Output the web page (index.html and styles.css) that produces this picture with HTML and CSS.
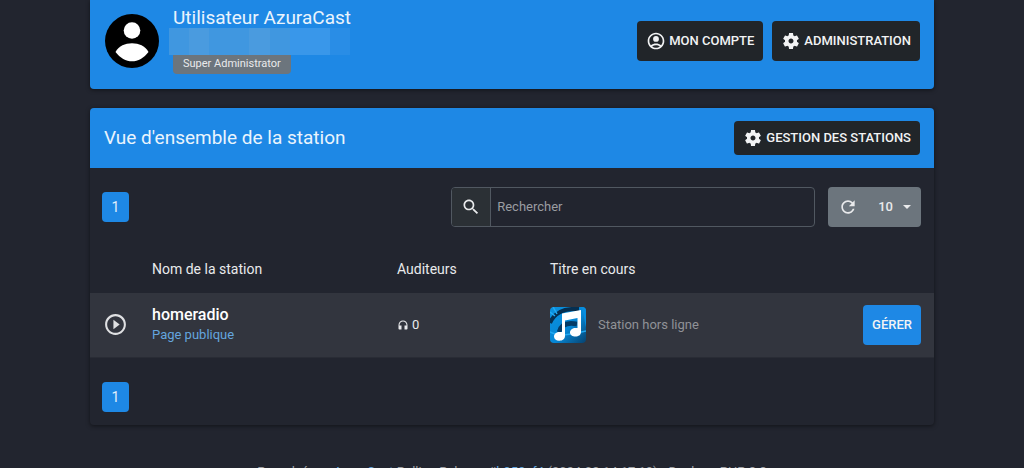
FILE: index.html
```html
<!DOCTYPE html>
<html lang="fr">
<head>
<meta charset="utf-8">
<title>AzuraCast</title>
<link rel="stylesheet" href="styles.css">
</head>
<body>
<svg class="sprite" aria-hidden="true">
  <symbol id="gear" viewBox="0 0 24 24"><path d="M19.14 12.94c.04-.3.06-.61.06-.94 0-.32-.02-.64-.07-.94l2.03-1.58c.18-.14.23-.41.12-.61l-1.92-3.32c-.12-.22-.37-.29-.59-.22l-2.39.96c-.5-.38-1.03-.7-1.62-.94l-.36-2.54c-.04-.24-.24-.41-.48-.41h-3.84c-.24 0-.43.17-.47.41l-.36 2.54c-.59.24-1.13.57-1.62.94l-2.39-.96c-.22-.08-.47 0-.59.22L2.740 8.870c-.12.21-.08.47.12.61l2.03 1.58c-.05.3-.09.63-.09.94s.02.64.07.94l-2.03 1.58c-.18.14-.23.41-.12.61l1.92 3.32c.12.22.37.29.59.22l2.39-.96c.5.38 1.03.7 1.62.94l.36 2.54c.05.24.24.41.48.41h3.84c.24 0 .44-.17.47-.41l.36-2.54c.59-.24 1.13-.56 1.62-.94l2.39.96c.22.08.47 0 .59-.22l1.92-3.32c.12-.22.07-.47-.12-.61l-2.01-1.58zM12 15c-1.65 0-3-1.35-3-3s1.35-3 3-3 3 1.35 3 3-1.35 3-3 3z"/></symbol>
</svg>
<main class="container">
  <section class="card profile">
    <svg class="avatar" viewBox="0 0 54 54" aria-hidden="true"><circle cx="27" cy="27" r="27"/><circle cx="27" cy="16.500" r="8.3" fill="#fff"/><path fill="#fff" d="M10.500 38C14 32 20 29.300 27 29.300s13 2.700 16.500 8.700C39 44 33 47.300 27 47.300S15 44 10.500 38z"/></svg>
    <div class="identity">
      <h1 class="title">Utilisateur AzuraCast</h1>
      <div class="redacted"><i></i><i></i><i></i><i></i><i></i><i></i><i></i><i></i><i></i></div>
      <span class="badge">Super Administrator</span>
    </div>
    <div class="actions">
      <button class="btn btn-dark btn-tall" type="button"><svg class="icon" viewBox="0 0 24 24" aria-hidden="true"><path d="M12 2C6.480 2 2 6.480 2 12s4.480 10 10 10 10-4.480 10-10S17.520 2 12 2zM7.350 18.500C8.660 17.560 10.260 17 12 17s3.340.56 4.650 1.500C15.340 19.440 13.740 20 12 20s-3.340-.56-4.650-1.500zm10.790-1.380C16.450 15.800 14.320 15 12 15s-4.450.8-6.140 2.120C4.700 15.730 4 13.950 4 12c0-4.420 3.580-8 8-8s8 3.580 8 8c0 1.950-.7 3.730-1.860 5.120z"/><circle cx="12" cy="9.500" r="3.500"/></svg>MON COMPTE</button>
      <button class="btn btn-dark btn-tall" type="button"><svg class="icon" aria-hidden="true"><use href="#gear"/></svg>ADMINISTRATION</button>
    </div>
  </section>

  <section class="card stations">
    <header class="card-header">
      <h2 class="title">Vue d'ensemble de la station</h2>
      <button class="btn btn-dark" type="button"><svg class="icon" aria-hidden="true"><use href="#gear"/></svg>GESTION DES STATIONS</button>
    </header>
    <div class="toolbar">
      <a class="page" href="#">1</a>
      <div class="search">
        <label class="search-icon" for="search" aria-label="Rechercher"><svg class="icon" viewBox="0 0 24 24" aria-hidden="true"><path d="M15.500 14h-.79l-.28-.27C15.410 12.590 16 11.110 16 9.500 16 5.910 13.090 3 9.500 3S3 5.910 3 9.500 5.910 16 9.500 16c1.610 0 3.090-.59 4.230-1.570l.27.28v.79l5 4.990L20.490 19l-4.990-5zm-6 0C7.010 14 5 11.990 5 9.500S7.010 5 9.500 5 14 7.010 14 9.500 11.990 14 9.500 14z"/></svg></label>
        <input class="search-input" id="search" type="text" placeholder="Rechercher">
      </div>
      <div class="group">
        <button class="group-btn" type="button" aria-label="Actualiser"><svg class="icon" viewBox="0 0 24 24" aria-hidden="true"><path d="M17.650 6.350C16.200 4.900 14.210 4 12 4c-4.420 0-7.990 3.580-7.990 8s3.570 8 7.990 8c3.730 0 6.840-2.550 7.730-6h-2.080c-.82 2.330-3.040 4-5.650 4-3.310 0-6-2.690-6-6s2.690-6 6-6c1.660 0 3.140.69 4.220 1.780L13 11h7V4l-2.350 2.350z"/></svg></button>
        <button class="group-btn" type="button">10<span class="caret"></span></button>
      </div>
    </div>
    <table class="table">
      <colgroup><col class="col-play"><col class="col-name"><col class="col-listeners"><col><col class="col-action"></colgroup>
      <thead>
        <tr><th></th><th>Nom de la station</th><th>Auditeurs</th><th>Titre en cours</th><th></th></tr>
      </thead>
      <tbody>
        <tr>
          <td class="cell-play"><button class="play" type="button" aria-label="Lecture"><svg viewBox="0 0 24 24" aria-hidden="true"><path d="M10 16.500l6-4.500-6-4.500v9zM12 2C6.480 2 2 6.480 2 12s4.480 10 10 10 10-4.480 10-10S17.520 2 12 2zm0 18c-4.410 0-8-3.590-8-8s3.590-8 8-8 8 3.590 8 8-3.590 8-8 8z"/></svg></button></td>
          <td><div class="station-name">homeradio</div><a class="link" href="#">Page publique</a></td>
          <td><div class="listeners"><svg class="headphones" viewBox="0 0 24 24" aria-hidden="true"><path d="M12 3c-4.970 0-9 4.030-9 9v7c0 1.100.9 2 2 2h4v-8H5v-1c0-3.870 3.130-7 7-7s7 3.130 7 7v1h-4v8h4c1.100 0 2-.9 2-2v-7c0-4.970-4.030-9-9-9z"/></svg>0</div></td>
          <td><div class="now-playing">
            <svg class="art" viewBox="0 0 36 36" aria-hidden="true">
              <defs><linearGradient id="sky" x1="0" y1="0" x2="1" y2="1"><stop offset="0" stop-color="#0b91df"/><stop offset=".55" stop-color="#0687d5"/><stop offset="1" stop-color="#07426f"/></linearGradient></defs>
              <rect width="36" height="36" fill="url(#sky)"/>
              <path d="M0 16C4 6 13 1 29 2" fill="none" stroke="#062f50" stroke-width="4"/>
              <path d="M9 25c2-7 8-10 18-8" fill="none" stroke="#053b65" stroke-width="4.500"/>
              <path d="M0 25c10 5 24 2 36-1M3 0l4 7M0 5l5 4" fill="none" stroke="#23aaf2" stroke-width="1.500"/>
              <path d="M31 0h5v20c-2-8-2-14-5-20z" fill="#078ee0"/>
              <path fill="#fff" d="M12 6.500L31 3v22c0 3-2.500 4.500-5.500 4.500S20 28 20 25.500s2.500-4.500 5.500-4.500h2V11L15 13.500V29c0 3-2.500 4.700-5.700 4.700S4 32 4 29.500 6.500 25 9.500 25H12z"/>
            </svg>
            <span class="offline">Station hors ligne</span>
          </div></td>
          <td class="cell-action"><button class="btn btn-primary btn-tall" type="button">GÉRER</button></td>
        </tr>
      </tbody>
    </table>
    <div class="pager"><a class="page" href="#">1</a></div>
  </section>
</main>
<footer class="footer">Propulsé par <a class="link" href="#">AzuraCast</a> Rolling Release #<a class="link" href="#">b959ef4</a> (2024-02-14 17:19) • Docker • PHP 8.3</footer>
</body>
</html>
```
FILE: styles.css
```css
* { box-sizing: border-box; }
html { background: #22252f; }
body {
  margin: 0;
  overflow: hidden;
  color: #e9eaec;
  font: 13px/20px Roboto, sans-serif;
}
button, input { font: inherit; color: inherit; }
.sprite { display: none; }
.container { max-width: 844px; margin: 0 auto; }
.card {
  border-radius: 4px;
  box-shadow: 0 1px 4px rgba(0, 0, 0, .5);
  overflow: hidden;
}
.title { margin: 0; font-size: 19px; line-height: 24px; font-weight: 400; color: #eaf4fd; }
.icon { width: 20px; height: 20px; fill: currentColor; flex: none; }

.profile {
  display: flex;
  align-items: flex-start;
  gap: 14px;
  padding: 6px 14px 15px 15px;
  border-radius: 0 0 4px 4px;
  background: #1e88e5;
}
.avatar { width: 54px; height: 54px; margin-top: 8px; }
.identity { flex: 1; }
.redacted { display: flex; width: 181px; height: 27px; margin: -2px 0 0 -4px; }
.redacted i { flex: 1; background: #4097e0; }
.redacted i:nth-child(2), .redacted i:nth-child(5) { background: #4a9bdf; }
.redacted i:nth-child(7), .redacted i:nth-child(8) { background: #3997ea; }
.redacted i:nth-child(9) { background: #298de6; }
.badge {
  display: block;
  width: max-content;
  padding: 0 10px 1px;
  border-radius: 0 0 4px 4px;
  background: #6c757d;
  font-size: 11px;
  line-height: 18px;
}
.actions { display: flex; gap: 9px; margin-top: 15px; }

.btn {
  display: inline-flex;
  align-items: center;
  gap: 3px;
  height: 34px;
  padding: 0 9px;
  border: 0;
  border-radius: 4px;
  color: #f2f3f4;
  font-weight: 500;
  white-space: nowrap;
}
.btn-dark { background: #212529; }
.btn-primary { background: #1e88e5; }
.btn-tall { height: 40px; }

.stations { margin-top: 19px; }
.card-header {
  display: flex;
  align-items: center;
  justify-content: space-between;
  padding: 13px 14px;
  background: #1e88e5;
}
.toolbar {
  display: flex;
  align-items: center;
  gap: 13px;
  padding: 19px 13px 17px 12px;
}
.page {
  display: block;
  width: 27px;
  border-radius: 4px;
  background: #1e88e5;
  color: #e1effb;
  font-size: 14px;
  line-height: 30px;
  text-align: center;
  text-decoration: none;
}
.search {
  display: flex;
  flex: 0 1 364px;
  height: 40px;
  margin-left: auto;
  border: 1px solid #515861;
  border-radius: 4px;
  overflow: hidden;
}
.search-icon {
  display: flex;
  align-items: center;
  padding: 0 9px;
  border-right: 1px solid #515861;
  background: #2b3035;
}
.search-input { flex: 1; min-width: 0; padding: 0 6px; border: 0; background: none; outline: 0; }
.search-input::placeholder { color: #9a9ca1; opacity: 1; }
.group { display: flex; height: 40px; border-radius: 4px; background: #6c757d; overflow: hidden; }
.group-btn {
  display: flex;
  align-items: center;
  gap: 10px;
  padding: 0 10px;
  border: 0;
  background: none;
  font-weight: 500;
}
.caret { border: 4px solid transparent; border-top-color: currentColor; border-bottom: 0; }

.table { width: 100%; border-collapse: collapse; table-layout: fixed; }
.table th { height: 49px; padding: 0 10px; font-size: 14px; font-weight: 400; text-align: left; }
.table td { height: 64px; padding: 0 10px; background: #32353e; border-bottom: 1px solid #292c35; }
.col-play { width: 52px; }
.col-name { width: 245px; }
.col-listeners { width: 153px; }
.col-action { width: 100px; }
.table .cell-play { padding: 0 0 0 13px; }
.table .cell-action { padding: 0 13px 0 0; text-align: right; }
.play { display: block; padding: 0; border: 0; background: none; }
.play svg { display: block; width: 25px; height: 25px; fill: #dfe0e2; }
.station-name { color: #fff; font-size: 16px; font-weight: 500; }
.link { color: #64a5df; text-decoration: none; }
.listeners { display: flex; align-items: center; gap: 3px; }
.headphones { width: 12px; height: 12px; fill: currentColor; }
.now-playing { display: flex; align-items: center; gap: 12px; }
.art { width: 36px; height: 36px; border-radius: 4px; }
.offline { color: #909297; }
.pager { padding: 24px 12px 13px; }
.footer { margin-top: 37px; color: #a0a2a6; text-align: center; white-space: nowrap; }
```
